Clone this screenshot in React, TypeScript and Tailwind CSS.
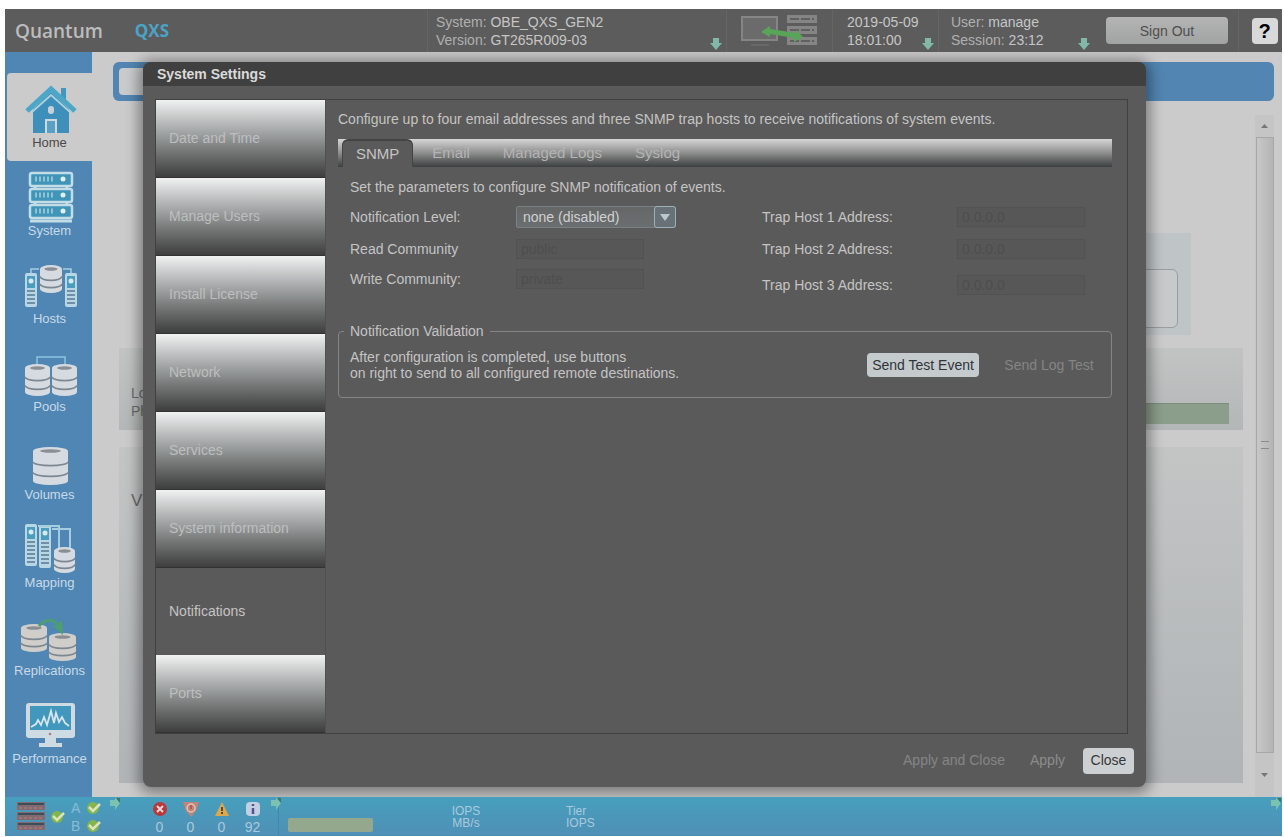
import React, { useState } from 'react';

const Disk = ({ x, y, w, h, fill = '#d5dbe0' }: { x: number; y: number; w: number; h: number; fill?: string }) => (
  <g>
    <path d={`M${x} ${y + 4}v${h - 8}a${w / 2} 4 0 0 0 ${w} 0v-${h - 8}z`} fill={fill} />
    <ellipse cx={x + w / 2} cy={y + 4} rx={w / 2} ry={4} fill={fill} />
    <ellipse cx={x + w / 2} cy={y + 4} rx={w / 3.4} ry={1.8} fill="#8a8f93" />
    <path
      d={`M${x} ${y + h / 3 + 2}a${w / 2} 4 0 0 0 ${w} 0M${x} ${y + (h * 2) / 3}a${w / 2} 4 0 0 0 ${w} 0`}
      fill="none"
      stroke="#7d8791"
      strokeWidth="1.6"
    />
  </g>
);

const Tower = ({ x, y, h }: { x: number; y: number; h: number }) => (
  <g>
    <rect x={x} y={y} width="12" height={h} rx="2" fill="#b9d6e4" />
    <rect x={x + 2} y={y + 3} width="8" height="12" fill="#4b9dbd" />
    <circle cx={x + 6} cy={y + 8} r="2.5" fill="#d9e8ee" />
    <path d={`M${x + 6} ${y + 17}v${h - 20}`} stroke="#6f8fa6" strokeWidth="8" strokeDasharray="2 2" />
  </g>
);

const HomeIcon = () => (
  <svg width="64" height="52" viewBox="0 0 64 52">
    <path d="M43 5h5v12h-5z" fill="#4795bd" />
    <path d="M15 26 33 9l18 17v24H15z" fill="#3f8fbb" />
    <path d="M9 28 33 6l24 22" fill="none" stroke="#4ba6c8" strokeWidth="5" />
    <path d="M14 29 33 12l19 17" fill="none" stroke="#a9d0dd" strokeWidth="2" />
    <rect x="30" y="23" width="6" height="8" rx="3" fill="#c5d3d8" />
    <path d="M28 50V37h10v13" fill="#5ba0c2" stroke="#cfd9dd" strokeWidth="2" />
  </svg>
);

const SystemIcon = () => (
  <svg width="64" height="52" viewBox="0 0 64 52">
    {[2, 18, 34].map((y) => (
      <g key={y}>
        <rect x="12" y={y} width="42" height="13" rx="2" fill="#4195b9" stroke="#c3dde7" strokeWidth="2.5" />
        <path d={`M17 ${y + 6}h18`} stroke="#8ec4d8" strokeWidth="5" strokeDasharray="2 2" />
        <circle cx="45" cy={y + 6} r="2.5" fill="#e3eef2" />
      </g>
    ))}
    <path d="M17 16v2M49 16v2M17 32v2M49 32v2M12 50h42" stroke="#c3dde7" strokeWidth="3" />
  </svg>
);

const HostsIcon = () => (
  <svg width="64" height="52" viewBox="0 0 64 52">
    <path d="M13 16V10h8M53 16V10h-8" fill="none" stroke="#a4cde0" strokeWidth="1.5" />
    <Disk x={22} y={6} w={22} h={28} />
    <Tower x={7} y={14} h={34} />
    <Tower x={47} y={14} h={34} />
  </svg>
);

const PoolsIcon = () => (
  <svg width="64" height="52" viewBox="0 0 64 52">
    <path d="M19 18V10h28v8" fill="none" stroke="#8ac4e0" strokeWidth="1.5" />
    <Disk x={7} y={17} w={25} h={32} />
    <Disk x={34} y={17} w={25} h={32} />
  </svg>
);

const VolumesIcon = () => (
  <svg width="64" height="52" viewBox="0 0 64 52">
    <Disk x={15} y={12} w={35} h={38} />
  </svg>
);

const MappingIcon = () => (
  <svg width="64" height="52" viewBox="0 0 64 52">
    <Tower x={7} y={1} h={42} />
    <Tower x={21} y={2} h={43} />
    <path d="M20 3h21v23M34 6h18v20" fill="none" stroke="#a4cde0" strokeWidth="2" />
    <Disk x={36} y={24} w={21} h={26} />
  </svg>
);

const ReplicationsIcon = () => (
  <svg width="64" height="52" viewBox="0 0 64 52">
    <Disk x={3} y={13} w={26} h={28} fill="#d0ceca" />
    <Disk x={31} y={22} w={27} h={28} fill="#d0ceca" />
    <path d="M21 15c5-6 12-8 18-3" fill="none" stroke="#4c9e72" strokeWidth="3" />
    <path d="m35 15 9-5 1 14z" fill="#4c9e72" />
  </svg>
);

const PerformanceIcon = () => (
  <svg width="64" height="52" viewBox="0 0 64 52">
    <rect x="8" y="4" width="49" height="35" rx="3" fill="#cfdbe3" />
    <rect x="12" y="7" width="41" height="24" fill="#4297bd" />
    <path
      d="m13 28 5-3 2-4 3 5 3-8 3 8 4-14 3 12 2-10 3 9 3-5 3 6 4 3"
      fill="none"
      stroke="#d7e6ee"
      strokeWidth="1.8"
    />
    <path d="M27 39h11v5h6v4H21v-4h6z" fill="#cfdbe3" />
    <circle cx="32" cy="35" r="1.3" fill="#a77f87" />
  </svg>
);

const DownArrow = () => (
  <svg width="12" height="12" viewBox="0 0 12 12" className="shrink-0">
    <path d="M3 0h6v5h3l-6 7-6-7h3z" fill="#80b9a7" />
  </svg>
);

const ConnectionIcon = () => (
  <svg width="80" height="32" viewBox="0 0 80 32">
    <rect x="2" y="2" width="35" height="23" fill="#6b6b6b" stroke="#858585" strokeWidth="2" />
    <path d="M11 30h18" stroke="#686868" strokeWidth="2" />
    {[0, 11, 22].map((y) => (
      <g key={y}>
        <rect x="47" y={y} width="30" height="8" fill="#858585" />
        <path d={`M50 ${y + 4}h24`} stroke="#625f5f" strokeWidth="2" strokeDasharray="9 2" />
      </g>
    ))}
    <path d="m21 17 9-6v3l26 4v-3l7 7-9 5v-4l-24-4v3z" fill="#58a558" />
  </svg>
);

const Check = () => (
  <svg width="15" height="15" viewBox="0 0 15 15">
    <circle cx="7" cy="8" r="6" fill="#83b54e" />
    <path d="m3 7 4 4 7-7" fill="none" stroke="#dce3bd" strokeWidth="2.5" />
  </svg>
);

const RackIcon = () => (
  <svg width="28" height="29" viewBox="0 0 28 29">
    {[0, 10, 20].map((y) => (
      <g key={y}>
        <rect y={y} width="28" height="8" fill="#826b70" />
        <path d={`M1 ${y + 2}h26`} stroke="#3e4e58" strokeWidth="2" />
        <path d={`M2 ${y + 6}h24`} stroke="#b77f78" strokeWidth="1" strokeDasharray="3 2" />
      </g>
    ))}
  </svg>
);

const Flag = () => (
  <svg width="12" height="14" viewBox="0 0 12 14">
    <path d="M1 3h5V0l5 6-5 7V9H1z" fill="#7cc2b0" />
    <path d="M7 1h4v5z" fill="#3d7664" />
  </svg>
);

const navItems = [
  { name: 'Home', icon: <HomeIcon /> },
  { name: 'System', icon: <SystemIcon /> },
  { name: 'Hosts', icon: <HostsIcon /> },
  { name: 'Pools', icon: <PoolsIcon /> },
  { name: 'Volumes', icon: <VolumesIcon /> },
  { name: 'Mapping', icon: <MappingIcon /> },
  { name: 'Replications', icon: <ReplicationsIcon /> },
  { name: 'Performance', icon: <PerformanceIcon /> },
];

const sections = [
  'Date and Time',
  'Manage Users',
  'Install License',
  'Network',
  'Services',
  'System information',
  'Notifications',
  'Ports',
];

const tabs = ['SNMP', 'Email', 'Managed Logs', 'Syslog'];

const alerts = [
  {
    id: 'critical',
    count: 0,
    icon: (
      <svg width="16" height="16" viewBox="0 0 16 16">
        <circle cx="8" cy="8" r="7" fill="#b8383c" />
        <path d="m5 5 6 6m0-6-6 6" stroke="#e8d8d8" strokeWidth="2" />
      </svg>
    ),
  },
  {
    id: 'error',
    count: 0,
    icon: (
      <svg width="16" height="16" viewBox="0 0 16 16">
        <path d="M0 1h16l-3 9-5 6-5-6z" fill="#c08478" />
        <circle cx="8" cy="7" r="4" fill="none" stroke="#e0c4bc" strokeWidth="1.5" />
        <path d="M8 4v4" stroke="#a94f4a" strokeWidth="1.5" />
      </svg>
    ),
  },
  {
    id: 'warning',
    count: 0,
    icon: (
      <svg width="16" height="16" viewBox="0 0 16 16">
        <path d="m8 1 7 14H1z" fill="#dba74f" />
        <path d="M8 6v4m0 1v2" stroke="#4b4133" strokeWidth="1.8" />
      </svg>
    ),
  },
  {
    id: 'info',
    count: 92,
    icon: (
      <svg width="16" height="16" viewBox="0 0 16 16">
        <rect x="1" y="1" width="14" height="14" rx="4" fill="#c3cfe2" />
        <path d="M8 3v2m0 2v6" stroke="#56548a" strokeWidth="2.5" />
      </svg>
    ),
  },
];

const Header = () => (
  <header className="h-[43px] bg-[#5c5c5c] text-[#b0b0b0] text-[14px] leading-[18px] flex">
    <div className="flex-1 flex items-center gap-8 pl-[10px] font-['Open_Sans',sans-serif] font-semibold">
      <span className="text-[19px] text-[#bdbdbd]">Quantum</span>
      <span className="text-[17px] text-[#4ba3c6] font-bold">QXS</span>
    </div>
    <div className="w-[299px] border-l border-[#656565] pl-2 pr-1 flex justify-between items-center">
      <div>
        <p>System: <span className="text-[#c6c6c6]">OBE_QXS_GEN2</span></p>
        <p>Version: <span className="text-[#c6c6c6]">GT265R009-03</span></p>
      </div>
      <div className="self-end pb-0.5"><DownArrow /></div>
    </div>
    <div className="w-[106px] border-l border-[#656565] flex items-center justify-center">
      <ConnectionIcon />
    </div>
    <div className="w-[106px] border-l border-[#656565] pl-[14px] pr-1 flex justify-between items-center text-[#c6c6c6]">
      <div>
        <p>2019-05-09</p>
        <p>18:01:00</p>
      </div>
      <div className="self-end pb-0.5"><DownArrow /></div>
    </div>
    <div className="w-[168px] border-l border-[#656565] pl-3 pr-4 flex justify-between items-center">
      <div>
        <p>User: <span className="text-[#c6c6c6]">manage</span></p>
        <p>Session: <span className="text-[#c6c6c6]">23:12</span></p>
      </div>
      <div className="self-end pb-0.5"><DownArrow /></div>
    </div>
    <div className="w-[133px] flex items-center border-r border-[#656565]">
      <button className="w-[122px] h-[27px] rounded-[4px] bg-linear-to-b from-[#b4b4b4] to-[#a1a3a3] text-[#4f4f4f]">
        Sign Out
      </button>
    </div>
    <div className="w-[43px] pl-2 flex items-center justify-center">
      <button className="w-[26px] h-[26px] rounded-[4px] bg-[#d9d9d9] text-black text-[20px] font-bold" aria-label="Help">?</button>
    </div>
  </header>
);

const Sidebar = () => (
  <nav className="w-[87px] bg-[#4f86b4] pt-[21px] shrink-0">
    {navItems.map((item, i) => (
      <a
        key={item.name}
        href="#"
        className={`ml-0.5 h-[88px] pt-[10px] flex flex-col items-center text-[13px] leading-[16px] ${
          i === 0 ? 'bg-[#cbcbcb] text-[#4a4a4a] rounded-l-[4px]' : 'text-[#c9dae8]'
        }`}
      >
        {item.icon}
        <span>{item.name}</span>
      </a>
    ))}
  </nav>
);

// dashboard that stays visible round the dialog
const Dashboard = () => (
  <div className="[grid-area:1/1] flex flex-col pt-[10px] pl-[21px] pr-2 text-[#686b6b]">
    <div className="h-[39px] rounded-[6px] bg-[#5285b1] flex p-[6px]">
      <div className="w-40 rounded-[4px] bg-[#c8cacc]"></div>
    </div>
    <div className="flex-1 flex gap-3 pl-[6px] pt-[14px]">
      <div className="flex-1 flex flex-col pb-[14px]">
        <div className="mt-[118px] mr-[52px] w-1/2 self-end h-[102px] bg-[#bfc4c6] pr-[13px] pt-9">
          <div className="h-[59px] rounded-[6px] border border-[#9a9e9f] bg-[#c7c9ca]"></div>
        </div>
        <div className="mt-[13px] h-[82px] bg-linear-to-b from-[#c2c4c4] to-[#b4b7b7] pl-3 pr-[14px] pt-9 text-[14px] leading-[18px] flex">
          <div className="w-40">
            <p>Lo</p>
            <p>Ph</p>
          </div>
          <div className="mt-[19px] flex-1 h-[21px] bg-[#8b9d8b] border-t border-[#7d8d7d]"></div>
        </div>
        <div className="mt-[17px] flex-1 bg-linear-to-b from-[#c3c5c5] to-[#b0b4b6] pl-3 pt-[43px] text-[17px] leading-[22px]">V</div>
      </div>
      <div className="w-[19px] bg-[#c5c5c5] flex flex-col items-center">
        <div className="h-[22px] flex items-center">
          <svg width="7" height="5" viewBox="0 0 7 5"><path d="m3.5 0 3.5 4H0z" fill="#777" /></svg>
        </div>
        <div className="flex-1 w-[18px] border border-[#a7a7a7] bg-linear-to-r from-[#c8c8c8] to-[#b4b4b4] flex items-center justify-center">
          <div className="w-2 h-2 border-y border-[#8a8a8a]"></div>
        </div>
        <div className="h-[44px] flex items-center">
          <svg width="7" height="5" viewBox="0 0 7 5"><path d="m3.500 4 3.500-4H0z" fill="#777" /></svg>
        </div>
      </div>
    </div>
  </div>
);

const Field = ({ id, label, value, width }: { id: string; label: string; value: string; width: string }) => (
  <>
    <label htmlFor={id} className={`${width} shrink-0`}>{label}</label>
    <input
      id={id}
      defaultValue={value}
      disabled
      className="w-32 h-5 px-1 bg-[#575757] border border-[#525252] text-[#4e4e4e]"
    />
  </>
);

const SnmpPanel = () => (
  <div className="pt-[10px]">
    <p className="pl-3 leading-[20px]">Set the parameters to configure SNMP notification of events.</p>
    <div className="pl-3 pt-1 flex">
      <div className="w-[412px]">
        <div className="h-8 flex items-center">
          <label htmlFor="level" className="w-[166px]">Notification Level:</label>
          <div className="relative w-[160px] h-[22px]">
            <select
              id="level"
              className="appearance-none w-full h-full pl-[6px] rounded-[2px] border border-[#7a8184] bg-linear-to-b from-[#656767] to-[#6b6e70] text-[#d0d0d0]"
            >
              <option>none (disabled)</option>
            </select>
            <span className="absolute right-0 top-0 w-[22px] h-[22px] border border-[#9db0ba] rounded-[3px] bg-[#687176] flex items-center justify-center pointer-events-none">
              <svg width="10" height="7" viewBox="0 0 10 7"><path d="M0 0h10L5 7z" fill="#b9c8cf" /></svg>
            </span>
          </div>
        </div>
        <div className="h-8 flex items-center">
          <Field id="read" label="Read Community" value="public" width="w-[166px]" />
        </div>
        <div className="h-7 flex items-center">
          <Field id="write" label="Write Community:" value="private" width="w-[166px]" />
        </div>
      </div>
      <div>
        <div className="h-8 flex items-center">
          <Field id="trap1" label="Trap Host 1 Address:" value="0.0.0.0" width="w-[195px]" />
        </div>
        <div className="h-8 flex items-center">
          <Field id="trap2" label="Trap Host 2 Address:" value="0.0.0.0" width="w-[195px]" />
        </div>
        <div className="h-10 flex items-center">
          <Field id="trap3" label="Trap Host 3 Address:" value="0.0.0.0" width="w-[195px]" />
        </div>
      </div>
    </div>
    <fieldset className="mt-4 border border-[#858585] rounded-[4px] pl-[5px] pr-2 pt-2 pb-4">
      <legend className="px-[6px] leading-[20px]">Notification Validation</legend>
      <div className="flex items-center pl-[6px]">
        <p className="flex-1 leading-[16px]">
          After configuration is completed, use buttons
          <br />
          on right to send to all configured remote destinations.
        </p>
        <button className="h-6 w-[112px] rounded-[4px] bg-[#c5cacd] text-[#303438]">Send Test Event</button>
        <button disabled className="ml-4 h-6 w-[108px] rounded-[4px] text-[#858585]">Send Log Test</button>
      </div>
    </fieldset>
  </div>
);

const SettingsDialog = () => {
  const [section, setSection] = useState('Notifications');
  const [tab, setTab] = useState('SNMP');

  return (
    <div
      role="dialog"
      aria-labelledby="dialog-title"
      className="[grid-area:1/1] z-10 my-[10px] ml-[51px] mr-[136px] flex flex-col rounded-[8px] overflow-hidden bg-[#5a5a5a] text-[#c4c4c4] text-[14px] shadow-[0_2px_14px_4px_rgba(0,0,0,0.4)]"
    >
      <h1 id="dialog-title" className="h-6 pl-[14px] bg-[#404040] text-[#dadada] text-[14px] leading-[24px] font-bold">
        System Settings
      </h1>
      <div className="flex-1 mt-[13px] ml-3 mr-[18px] flex border border-[#404040]">
        <div className="w-[170px] shrink-0 border-r border-[#505050]">
          {sections.map((name) => (
            <button
              key={name}
              onClick={() => setSection(name)}
              className={`w-full pl-[13px] text-left block ${
                section === name
                  ? 'h-[87px] text-[#c4c4c4]'
                  : 'h-[78px] border-b border-[#333333] text-[#bdbfbf] bg-linear-to-b from-[#f0f3f2] via-[#939696] to-[#3e3e3e]'
              }`}
            >
              {name}
            </button>
          ))}
        </div>
        <div className="flex-1 pl-3 pr-[15px] pt-[9px]">
          <p className="leading-[20px]">
            Configure up to four email addresses and three SNMP trap hosts to receive notifications of system events.
          </p>
          <div role="tablist" className="mt-[10px] h-7 pl-1 flex gap-[5px] text-[15px] bg-linear-to-b from-[#d6d6d6] via-[#8e8e8e] to-[#3c4040]">
            {tabs.map((name) => (
              <button
                key={name}
                role="tab"
                aria-selected={tab === name}
                onClick={() => setTab(name)}
                className={
                  tab === name
                    ? 'px-[13px] bg-[#5a5a5a] text-[#c4c4c4] rounded-t-[6px] border-t-2 border-x border-[#444444]'
                    : 'px-[14px] text-[#b4b4b4]'
                }
              >
                {name}
              </button>
            ))}
          </div>
          <SnmpPanel />
        </div>
      </div>
      <div className="h-[53px] pr-3 flex items-center justify-end gap-[11px]">
        <button disabled className="h-[26px] w-[116px] text-[#858585]">Apply and Close</button>
        <button disabled className="h-[26px] w-[49px] text-[#8c8c8c]">Apply</button>
        <button className="h-[26px] w-[51px] rounded-[4px] bg-[#cdd0d2] text-[#33373a]">Close</button>
      </div>
    </div>
  );
};

const StatusBar = () => (
  <footer className="h-[39px] bg-linear-to-b from-[#469fbd] to-[#4f8fb6] text-[#a9cade] text-[12px] leading-[12px] flex">
    <div className="w-[127px] pl-3 flex items-center">
      <RackIcon />
      <span className="ml-[5px]"><Check /></span>
      <div className="ml-[6px] flex flex-col gap-[6px] text-[14px] text-[#86bdd8]">
        <span>A</span>
        <span>B</span>
      </div>
      <div className="ml-[6px] flex flex-col gap-[3px]">
        <Check />
        <Check />
      </div>
      <span className="ml-[8px] self-start"><Flag /></span>
    </div>
    <div className="w-[147px] pl-3 flex items-center border-r border-[#4586a5]">
      <div className="flex">
        {alerts.map((alert) => (
          <div key={alert.id} className="w-[31px] flex flex-col items-center gap-1 text-[14px]">
            {alert.icon}
            <span>{alert.count}</span>
          </div>
        ))}
      </div>
      <span className="ml-[2px] self-start"><Flag /></span>
    </div>
    <div className="w-[165px] pl-[9px] pt-[21px]">
      <div className="w-[85px] h-[14px] rounded-[2px] bg-[#93a88c]"></div>
    </div>
    <div className="w-[44px] flex flex-col justify-center text-center">
      <span>IOPS</span>
      <span>MB/s</span>
    </div>
    <div className="flex-1 pl-[78px] flex flex-col justify-center">
      <span>Tier</span>
      <span>IOPS</span>
    </div>
    <Flag />
  </footer>
);

export default function App() {
  return (
    <div className="min-h-screen bg-white pt-[9px] pl-[5px] pr-[2px] pb-px flex flex-col font-['Liberation_Sans',Arial,sans-serif]">
      <Header />
      <div className="flex-1 flex">
        <Sidebar />
        <main className="flex-1 grid bg-[#cbcbcb] overflow-hidden">
          <Dashboard />
          <SettingsDialog />
        </main>
      </div>
      <StatusBar />
    </div>
  );
}
